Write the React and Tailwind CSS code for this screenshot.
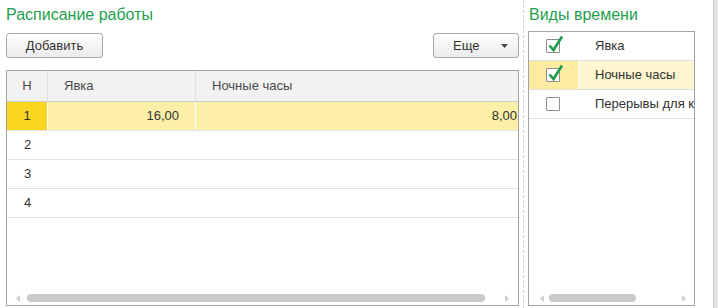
import React from "react";

const green = "text-[#1f9f4f]";

function Arrow({ dir }) {
  return (
    <svg width="4" height="7" viewBox="0 0 4 7" className="shrink-0">
      {dir === "left" ? (
        <path d="M4 0 L0 3.5 L4 7 Z" fill="#cfcfcf" />
      ) : (
        <path d="M0 0 L4 3.5 L0 7 Z" fill="#cfcfcf" />
      )}
    </svg>
  );
}

function HScroll({ arrowL, thumbL, thumbW, arrowR }) {
  return (
    <div className="flex items-center h-[8px] mb-[3px]">
      <div style={{ width: arrowL }} className="shrink-0" />
      <Arrow dir="left" />
      <div style={{ width: thumbL - arrowL - 4 }} className="shrink-0" />
      <div style={{ width: thumbW }} className="h-[8px] rounded-[4px] bg-[#cbcbcb] shrink-0" />
      <div style={{ width: arrowR - thumbL - thumbW }} className="shrink-0" />
      <Arrow dir="right" />
    </div>
  );
}

function Checkbox({ checked }) {
  return (
    <span className="relative block w-[14px] h-[14px] border border-[#8e8e8e] bg-white rounded-[1px]">
      {checked && (
        <svg className="absolute left-[0px] top-[-5px]" width="17" height="18" viewBox="0 0 17 18">
          <path d="M2.5 10.5 L6.5 15 L15 1.5" fill="none" stroke="#1f9a45" strokeWidth="2.6" strokeLinejoin="miter" />
        </svg>
      )}
    </span>
  );
}

function Button({ children, className = "" }) {
  return (
    <button className={`h-[25px] border border-[#a9a9a9] rounded-[3px] bg-gradient-to-b from-[#ffffff] to-[#ebebeb] text-[13px] text-[#333] ${className}`}>
      {children}
    </button>
  );
}

export default function App() {
  const rows = [2, 3, 4];
  return (
    <div className="w-[718px] h-[308px] bg-white flex overflow-hidden font-['Liberation_Sans',Arial,sans-serif] text-[#333]">
      {/* Расписание работы */}
      <div className="ml-[6px] w-[513px] flex flex-col">
        <div className={`mt-[5px] h-[20px] leading-[20px] text-[16px] ${green}`}>Расписание работы</div>
        <div className="mt-[8px] flex justify-between">
          <Button className="w-[97px]">Добавить</Button>
          <Button className="w-[86px] flex items-center pl-[19px]">
            <span>Еще</span>
            <svg width="7" height="4" viewBox="0 0 7 4" className="ml-[22px]">
              <path d="M0 0 L7 0 L3.5 4 Z" fill="#444" />
            </svg>
          </Button>
        </div>
        <div className="mt-[12px] mb-[2px] flex-1 border border-[#a3a3a3] flex flex-col text-[13px]">
          <div className="h-[31px] flex bg-[#f2f2f2] border-b border-[#cdcdcd] text-[#4a4a4a]">
            <div className="w-[41px] border-r border-[#dedede] flex items-center justify-center">Н</div>
            <div className="w-[148px] border-r border-[#dedede] flex items-center pl-[16px]">Явка</div>
            <div className="flex-1 flex items-center pl-[16px]">Ночные часы</div>
          </div>
          <div className="h-[29px] flex border-b border-[#e0e0e0]">
            <div className="w-[41px] bg-[#fad620] border-r border-white flex items-center justify-center">1</div>
            <div className="w-[148px] bg-[#fcefa7] border-r border-white flex items-center justify-end pr-[16px]">16,00</div>
            <div className="flex-1 bg-[#fcefa7] flex items-center justify-end pr-[1px]">8,00</div>
          </div>
          {rows.map((n) => (
            <div key={n} className="h-[29px] flex border-b border-[#e0e0e0]">
              <div className="w-[41px] flex items-center justify-center">{n}</div>
            </div>
          ))}
          <div className="flex-1" />
          <HScroll arrowL={9} thumbL={20} thumbW={458} arrowR={498} />
        </div>
      </div>

      {/* separator */}
      <div className="ml-[4px] w-0 h-full border-l border-dashed border-[#d2d2d2]" />

      {/* Виды времени */}
      <div className="ml-[4px] w-[167px] flex flex-col">
        <div className={`mt-[5px] h-[20px] leading-[20px] text-[16px] pl-[1px] whitespace-nowrap ${green}`}>Виды времени</div>
        <div className="mt-[6px] mb-[2px] flex-1 border border-[#a3a3a3] flex flex-col text-[13px] overflow-hidden">
          {[
            { t: "Явка", c: true, sel: false },
            { t: "Ночные часы", c: true, sel: true },
            { t: "Перерывы для кормления ребенка", c: false, sel: false },
          ].map((r) => (
            <div key={r.t} className="h-[29px] flex border-b border-[#e0e0e0]">
              <div className={`w-[50px] shrink-0 border-r flex items-center pl-[17px] ${r.sel ? "bg-[#fcec9f] border-white" : "border-transparent"}`}>
                <Checkbox checked={r.c} />
              </div>
              <div className={`flex-1 flex items-center pl-[16px] whitespace-nowrap overflow-hidden ${r.sel ? "bg-[#fdf6d0]" : ""}`}>{r.t}</div>
            </div>
          ))}
          <div className="flex-1" />
          <HScroll arrowL={11} thumbL={20} thumbW={87} arrowR={153} />
        </div>
      </div>

      <div className="ml-auto w-[5px] h-full bg-[#e3e3e3] border-l border-[#d0d0d0]" />
    </div>
  );
}
